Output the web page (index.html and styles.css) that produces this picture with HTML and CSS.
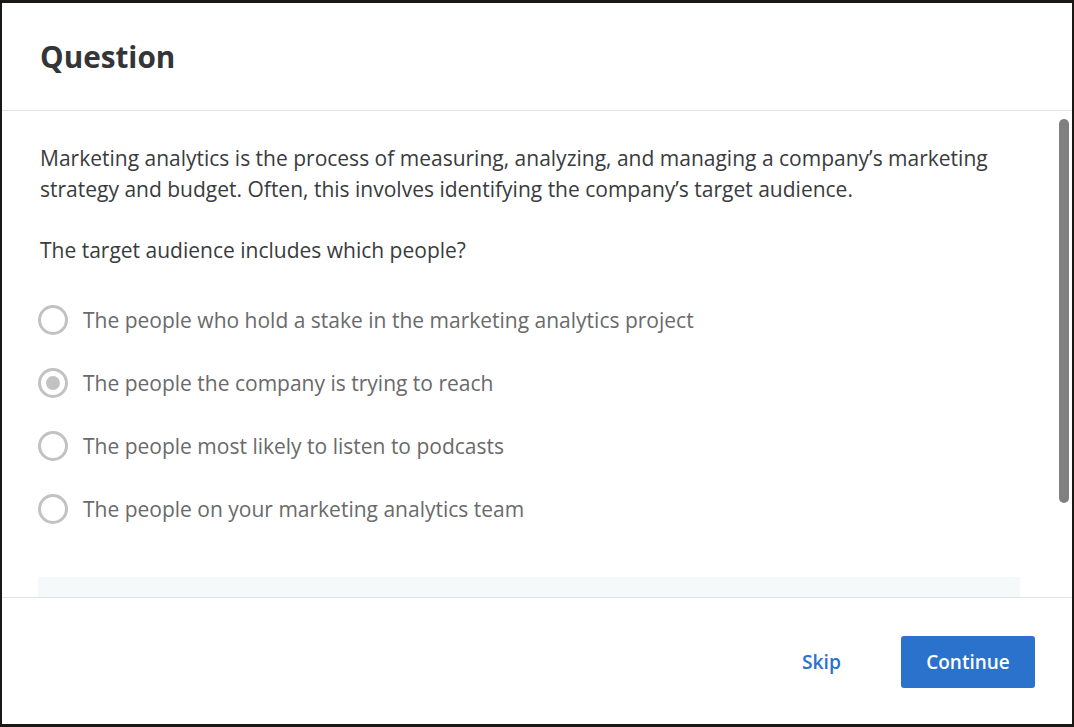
FILE: index.html
```html
<!DOCTYPE html>
<html lang="en">
<head>
<meta charset="utf-8">
<title>Question</title>
<link rel="stylesheet" href="styles.css">
</head>
<body>
<div class="dialog">
  <header class="dialog-header">
    <h1 class="title">Question</h1>
  </header>
  <main class="dialog-body">
    <div class="content">
      <p class="prompt">Marketing analytics is the process of measuring, analyzing, and managing a company’s marketing strategy and budget. Often, this involves identifying the company’s target audience.</p>
      <p class="question">The target audience includes which people?</p>
      <ul class="options">
        <li class="option"><span class="radio"></span><span class="label">The people who hold a stake in the marketing analytics project</span></li>
        <li class="option"><span class="radio checked"></span><span class="label">The people the company is trying to reach</span></li>
        <li class="option"><span class="radio"></span><span class="label">The people most likely to listen to podcasts</span></li>
        <li class="option"><span class="radio"></span><span class="label">The people on your marketing analytics team</span></li>
      </ul>
      <div class="feedback"></div>
    </div>
    <div class="scrollbar"></div>
  </main>
  <footer class="dialog-footer">
    <button class="btn-skip">Skip</button>
    <button class="btn-continue">Continue</button>
  </footer>
</div>
</body>
</html>
```
FILE: styles.css
```css
* { box-sizing: border-box; }
html, body { margin: 0; padding: 0; }
body {
  background: #1b1715;
  font-family: "Open Sans", "Noto Sans", sans-serif;
  padding: 3px 2px 3px 2px;
  height: 727px;
  overflow: hidden;
}
.dialog {
  background: #fff;
  height: 721px;
  display: flex;
  flex-direction: column;
}
.dialog-header {
  height: 108px;
  border-bottom: 1px solid #e2e2e2;
  display: flex;
  align-items: center;
  padding: 0 38px;
  flex: none;
}
.title {
  margin: 0;
  font-size: 29.7px;
  font-weight: 700;
  color: #333537;
}
.dialog-body {
  position: relative;
  flex: 1;
  overflow: hidden;
}
.content {
  padding: 32px 52px 0 38px;
}
.prompt, .question {
  margin: 0;
  font-size: 21px;
  line-height: 31px;
  color: #393b3d;
}
.question { margin-top: 30px; }
.options {
  list-style: none;
  margin: 39px 0 0;
  padding: 0;
  display: flex;
  flex-direction: column;
  gap: 33px;
}
.option {
  display: flex;
  align-items: center;
  gap: 15px;
  height: 30px;
}
.radio {
  width: 30px;
  height: 30px;
  border: 3px solid #c2c2c2;
  border-radius: 50%;
  flex: none;
  display: flex;
  align-items: center;
  justify-content: center;
  margin-left: -2px;
}
.radio.checked::after {
  content: "";
  width: 14px;
  height: 14px;
  border-radius: 50%;
  background: #c2c2c2;
}
.label {
  font-size: 21px;
  color: #6a6a6a;
}
.feedback {
  margin: 53px 0 0 -2px;
  height: 120px;
  background: #f6f9f9;
}
.scrollbar {
  position: absolute;
  top: 8px;
  right: 3px;
  width: 10px;
  height: 384px;
  border-radius: 5px;
  background: #808080;
}
.dialog-footer {
  height: 127px;
  border-top: 1px solid #e2e2e2;
  display: flex;
  align-items: center;
  justify-content: flex-end;
  padding: 2px 37px 0 0;
  flex: none;
}
.btn-skip {
  background: none;
  border: none;
  font-family: inherit;
  font-size: 19.3px;
  font-weight: 600;
  color: #2a72cc;
  padding: 0 0 2px;
  margin-right: 60px;
  cursor: pointer;
}
.btn-continue {
  width: 134px;
  height: 52px;
  background: #2a72cc;
  border: none;
  border-radius: 3px;
  color: #fff;
  font-family: inherit;
  font-size: 19px;
  font-weight: 600;
  cursor: pointer;
}
```
